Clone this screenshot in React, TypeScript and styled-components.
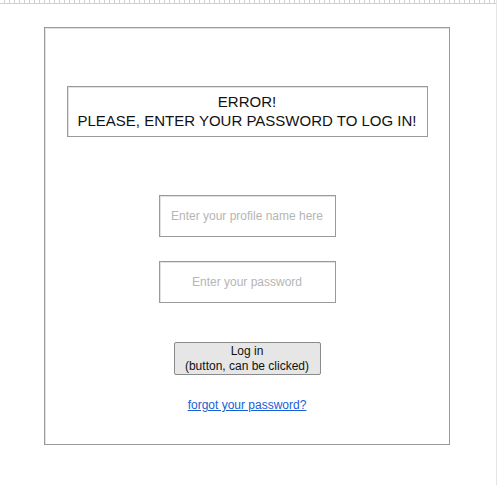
import React from "react";
import styled, { createGlobalStyle } from "styled-components";

const GlobalStyle = createGlobalStyle`
  html, body {
    margin: 0;
    padding: 0;
    background: #fff;
    font-family: "Liberation Sans", Arial, sans-serif;
  }
`;

const Page = styled.div`
  position: relative;
  width: 496px;
  height: 485px;
  border-right: 1px solid #e4e4e4;
  background: #fff;
`;

const Ruler = styled.div`
  height: 3px;
  border-bottom: 1px solid #d0d0d0;
  background: repeating-linear-gradient(
    to right,
    transparent 0,
    transparent 4px,
    #d0d0d0 4px,
    #d0d0d0 5px
  );
`;

const Frame = styled.div`
  box-sizing: border-box;
  margin: 23px 0 0 44px;
  width: 406px;
  height: 418px;
  border: 1px solid #9a9a9a;
  box-shadow: inset 1px 1px 0 #e2e2e2;
  display: flex;
  flex-direction: column;
  align-items: center;
  padding-top: 58px;
`;

const ErrorBox = styled.div`
  box-sizing: border-box;
  width: 361px;
  height: 51px;
  border: 1px solid #9a9a9a;
  box-shadow: inset 1px 1px 0 #e2e2e2;
  display: flex;
  flex-direction: column;
  align-items: center;
  justify-content: center;
  padding-bottom: 1px;
  font-size: 15px;
  line-height: 19px;
  color: #111;
  text-align: center;
  white-space: nowrap;
`;

const Field = styled.input<{ $top: number }>`
  box-sizing: border-box;
  margin-top: ${(p) => p.$top}px;
  width: 177px;
  height: 42px;
  border: 1px solid #9a9a9a;
  box-shadow: inset 1px 1px 0 #e2e2e2;
  outline: none;
  padding: 0 6px;
  text-align: center;
  font-family: "Liberation Sans", Arial, sans-serif;
  font-size: 12px;
  color: #333;
  background: #fff;
  &::placeholder {
    color: #b5b5b5;
  }
`;

const LoginButton = styled.button`
  box-sizing: border-box;
  margin-top: 39px;
  width: 147px;
  height: 33px;
  border: 1px solid #8a8a8a;
  border-radius: 2px;
  background: #e6e6e6;
  padding: 0;
  font-family: "Liberation Sans", Arial, sans-serif;
  font-size: 12px;
  line-height: 15px;
  color: #111;
  cursor: pointer;
  display: flex;
  flex-direction: column;
  align-items: center;
  justify-content: center;
`;

const ForgotLink = styled.a`
  margin-top: 23px;
  font-size: 12px;
  line-height: 14px;
  color: #1560d6;
  text-decoration: underline;
  cursor: pointer;
`;

export default function App() {
  return (
    <Page>
      <GlobalStyle />
      <Ruler />
      <Frame>
        <ErrorBox>
          <span>ERROR!</span>
          <span>PLEASE, ENTER YOUR PASSWORD TO LOG IN!</span>
        </ErrorBox>
        <Field $top={58} type="text" placeholder="Enter your profile name here" />
        <Field $top={24} type="password" placeholder="Enter your password" />
        <LoginButton type="button">
          <span>Log in</span>
          <span>(button, can be clicked)</span>
        </LoginButton>
        <ForgotLink href="#">forgot your password?</ForgotLink>
      </Frame>
    </Page>
  );
}
